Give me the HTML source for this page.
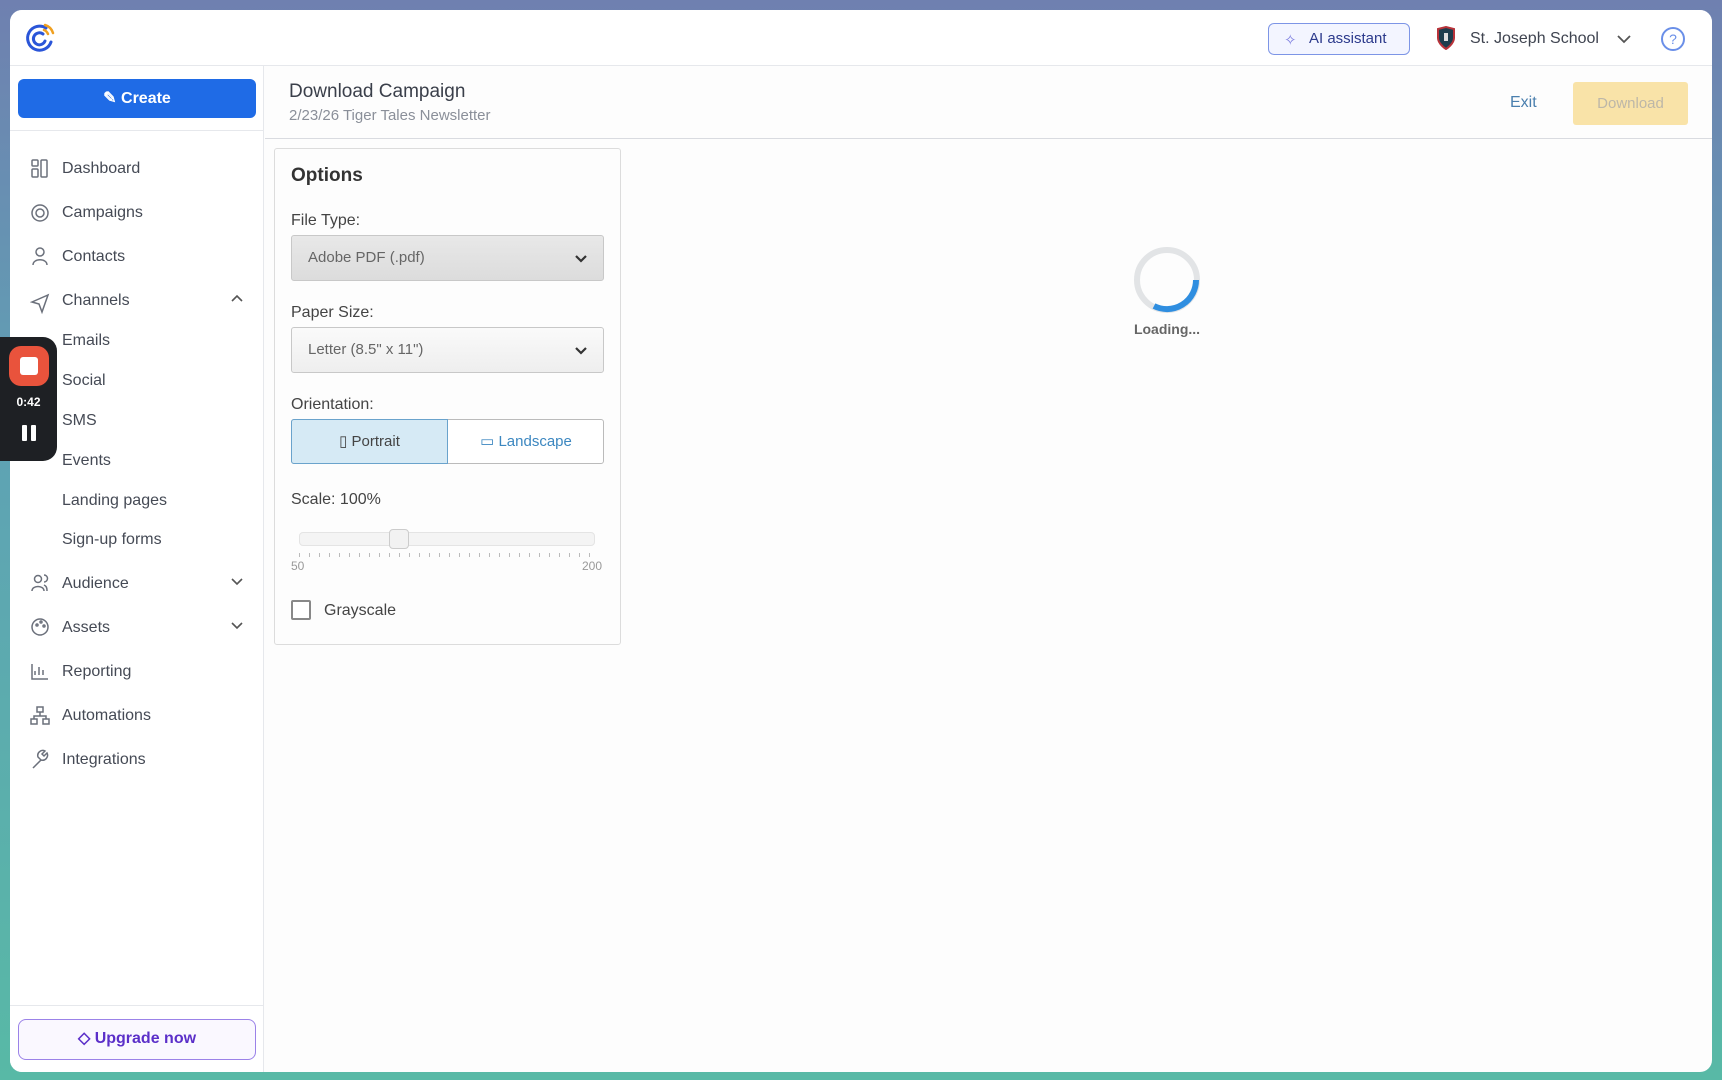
<!DOCTYPE html>
<html><head><meta charset="utf-8"><style>
*{box-sizing:border-box;margin:0;padding:0}
body{width:1722px;height:1080px;overflow:hidden;font-family:"Liberation Sans",sans-serif;background:linear-gradient(180deg,#6f80b0 0%,#5fa2b4 40%,#58b9a6 100%);position:relative}
.win{position:absolute;left:10px;top:10px;width:1702px;height:1062px;background:#fdfdfd;border-radius:12px;overflow:hidden}
.abs{position:absolute}
.top{left:0;top:0;width:1702px;height:56px;border-bottom:1px solid #e6e8ec;background:#fff}
.side{left:0;top:56px;width:254px;height:1006px;border-right:1px solid #e6e8ec;background:#fff}
.nav{position:absolute;left:52px;font-size:16px;color:#454a55}
.main-h{left:255px;top:56px;width:1447px;height:73px;border-bottom:1px solid #d9dbe0;background:#fdfdfd}
.lbl{position:absolute;font-size:16px;color:#444}
</style></head><body>
<div class="win">
 <div class="abs top">
  <svg class="abs" style="left:14px;top:12px" width="32" height="32" viewBox="0 0 32 32"><path d="M22 6A12 12 0 1 0 27 20" fill="none" stroke="#2a55d8" stroke-width="3" stroke-linecap="round"/><path d="M19 12A6 6 0 1 0 21 19" fill="none" stroke="#2a55d8" stroke-width="3" stroke-linecap="round"/><path d="M21 3A12 12 0 0 1 29 11" fill="none" stroke="#f0a020" stroke-width="2.5" stroke-linecap="round"/><path d="M20 8A7 7 0 0 1 24 12" fill="none" stroke="#f0a020" stroke-width="2.5" stroke-linecap="round"/></svg>
  <div class="abs" style="left:1258px;top:13px;width:142px;height:32px;border:1.5px solid #7d95e6;border-radius:6px;background:#f3f5ff;font-size:15px;color:#2c3a8c;line-height:29px;padding-left:40px">AI assistant</div>
  <div class="abs" style="left:1274px;top:21px;color:#7d7ee0;font-size:15px">✧</div>
  <svg class="abs" style="left:1426px;top:16px" width="20" height="24" viewBox="0 0 20 24"><path d="M2 3L10 1L18 3V12C18 18 10 23 10 23C10 23 2 18 2 12Z" fill="#1d3d4d" stroke="#b8333a" stroke-width="2"/><rect x="8" y="7" width="4" height="8" fill="#ddd"/></svg>
  <div class="abs" style="left:1460px;top:20px;font-size:16px;color:#3f4450">St. Joseph School</div>
  <svg class="abs" style="left:1606px;top:23px" width="16" height="12"><path d="M2 3L8 9L14 3" fill="none" stroke="#555" stroke-width="1.8"/></svg>
  <div class="abs" style="left:1651px;top:17px;width:24px;height:24px;border:2px solid #6a8fe8;border-radius:50%;color:#6a8fe8;font-size:14px;text-align:center;line-height:20px">?</div>
 </div>
 <div class="abs side">
  <div class="abs" style="left:8px;top:13px;width:238px;height:39px;background:#1f6be6;border-radius:6px;color:#fff;font-size:16px;font-weight:bold;text-align:center;line-height:39px">✎ Create</div>
  <div class="abs" style="left:0;top:64px;width:254px;border-top:1px solid #e6e8ec"></div>
  <div class="nav" style="top:94px">Dashboard</div>
  <div class="nav" style="top:138px">Campaigns</div>
  <div class="nav" style="top:182px">Contacts</div>
  <div class="nav" style="top:226px">Channels</div>
  <div class="nav" style="top:266px">Emails</div>
  <div class="nav" style="top:306px">Social</div>
  <div class="nav" style="top:346px">SMS</div>
  <div class="nav" style="top:386px">Events</div>
  <div class="nav" style="top:426px">Landing pages</div>
  <div class="nav" style="top:465px">Sign-up forms</div>
  <div class="nav" style="top:509px">Audience</div>
  <div class="nav" style="top:553px">Assets</div>
  <div class="nav" style="top:597px">Reporting</div>
  <div class="nav" style="top:641px">Automations</div>
  <div class="nav" style="top:685px">Integrations</div>
  <svg class="abs" style="left:20px;top:93px" width="20" height="640" viewBox="0 0 20 640" fill="none" stroke="#6b707b" stroke-width="1.5">
   <rect x="2" y="1" width="6" height="6" rx="1"/><rect x="2" y="10" width="6" height="8" rx="1"/><rect x="11" y="1" width="6" height="17" rx="1"/>
   <circle cx="10" cy="54" r="8"/><circle cx="10" cy="54" r="4"/>
   <circle cx="10" cy="93" r="4"/><path d="M3 106C3 99 17 99 17 106"/>
   <path d="M2 143L18 136L12 153L9 145Z"/>
   <circle cx="8" cy="420" r="3.5"/><path d="M2 432C2 426 14 426 14 432"/><path d="M14 416a3 3 0 0 1 0 7M17 432c0-4-1-5-3-6"/>
   <circle cx="10" cy="468" r="8"/><circle cx="7" cy="466" r="1"/><circle cx="11" cy="463" r="1"/><circle cx="14" cy="467" r="1"/>
   <path d="M2 505V520H18M5 516V512M9 516V508M13 516V511"/>
   <rect x="7" y="548" width="6" height="5"/><rect x="1" y="560" width="6" height="5"/><rect x="13" y="560" width="6" height="5"/><path d="M10 553V557H4V560M10 557H16V560"/>
   <path d="M3 609L11 601M11 601A5 5 0 0 0 17 594L14 597L12 595L15 592A5 5 0 0 0 8 598Z"/>
  </svg>
  <svg class="abs" style="left:220px;top:226px" width="14" height="340" fill="none" stroke="#555" stroke-width="1.6"><path d="M2 9L7 4L12 9"/><path d="M2 287L7 292L12 287"/><path d="M2 331L7 336L12 331"/></svg>
  <div class="abs" style="left:0;top:939px;width:254px;border-top:1px solid #e6e8ec"></div>
  <div class="abs" style="left:8px;top:953px;width:238px;height:41px;border:1.5px solid #9b82e8;border-radius:8px;background:#faf8ff;color:#5b2fc9;font-size:16px;font-weight:bold;text-align:center;line-height:38px">◇ Upgrade now</div>
 </div>
 <div class="abs main-h">
  <div class="abs" style="left:24px;top:15px;font-size:19px;color:#3a3f4a">Download Campaign</div>
  <div class="abs" style="left:24px;top:41px;font-size:15px;color:#8a8f99">2/23/26 Tiger Tales Newsletter</div>
  <div class="abs" style="left:1245px;top:28px;font-size:16px;color:#4a7fae">Exit</div>
  <div class="abs" style="left:1308px;top:16px;width:115px;height:43px;background:#f9e3a8;border-radius:3px;color:#bdb7a8;font-size:15px;text-align:center;line-height:43px">Download</div>
 </div>
 <div class="abs" style="left:264px;top:138px;width:347px;height:497px;border:1.5px solid #dcdcdc;border-radius:3px;background:#fdfdfd">
  <div class="abs" style="left:16px;top:16px;font-size:19px;font-weight:bold;color:#333">Options</div>
  <div class="lbl" style="left:16px;top:63px">File Type:</div>
  <div class="abs" style="left:16px;top:86px;width:313px;height:46px;border:1px solid #c8c8c8;border-radius:3px;background:linear-gradient(#e8e8e8,#dcdcdc);font-size:15px;color:#666;line-height:44px;padding-left:16px">Adobe PDF (.pdf)</div>
  <div class="lbl" style="left:16px;top:155px">Paper Size:</div>
  <div class="abs" style="left:16px;top:178px;width:313px;height:46px;border:1px solid #c8c8c8;border-radius:3px;background:linear-gradient(#fafafa,#eeeeee);font-size:15px;color:#666;line-height:44px;padding-left:16px">Letter (8.5" x 11")</div>
  <svg class="abs" style="left:299px;top:104px" width="14" height="110" fill="none" stroke="#333" stroke-width="2.2"><path d="M2 3L7 8L12 3"/><path d="M2 95L7 100L12 95"/></svg>
  <div class="lbl" style="left:16px;top:247px">Orientation:</div>
  <div class="abs" style="left:16px;top:270px;width:313px;height:45px;border:1px solid #bbb;border-radius:3px;background:#fff"></div>
  <div class="abs" style="left:16px;top:270px;width:157px;height:45px;border:1px solid #6aa3cc;border-radius:3px 0 0 3px;background:#d6eaf5;font-size:15px;color:#444;line-height:43px;text-align:center">▯ Portrait</div>
  <div class="abs" style="left:173px;top:270px;width:156px;height:45px;font-size:15px;color:#3c87c0;line-height:45px;text-align:center">▭ Landscape</div>
  <div class="lbl" style="left:16px;top:342px">Scale: 100%</div>
  <div class="abs" style="left:24px;top:383px;width:296px;height:14px;border:1px solid #e4e4e4;border-radius:4px;background:#f4f4f4"></div>
  <div class="abs" style="left:114px;top:380px;width:20px;height:20px;border:1px solid #ccc;border-radius:4px;background:#f2f2f2"></div>
  <div class="abs" style="left:24px;top:404px;width:296px;height:4px;background:repeating-linear-gradient(90deg,#bbb 0 1px,transparent 1px 10px)"></div>
  <div class="abs" style="left:16px;top:410px;font-size:12px;color:#999">50</div>
  <div class="abs" style="left:307px;top:410px;font-size:12px;color:#999">200</div>
  <div class="abs" style="left:16px;top:451px;width:20px;height:20px;border:2px solid #888;border-radius:2px;background:#fff"></div>
  <div class="lbl" style="left:49px;top:453px">Grayscale</div>
 </div>
 <svg class="abs" style="left:1123px;top:236px" width="68" height="68"><circle cx="34" cy="34" r="30" fill="none" stroke="#e2e4e6" stroke-width="6"/><path d="M63 34A29 29 0 0 1 21 60" fill="none" stroke="#2f8ee0" stroke-width="6"/></svg>
 <div class="abs" style="left:1120px;top:311px;width:74px;text-align:center;font-size:14px;font-weight:bold;color:#666">Loading...</div>
</div>
<div class="abs" style="left:0;top:337px;width:57px;height:124px;background:#1e2024;border-radius:0 14px 14px 0"></div>
<div class="abs" style="left:9px;top:346px;width:40px;height:40px;background:#e9533c;border-radius:12px"></div>
<div class="abs" style="left:20px;top:357px;width:18px;height:18px;background:#fff;border-radius:3px"></div>
<div class="abs" style="left:0;top:395px;width:57px;text-align:center;font-size:12px;font-weight:bold;color:#fff">0:42</div>
<div class="abs" style="left:22px;top:425px;width:5px;height:16px;background:#fff;border-radius:1px"></div>
<div class="abs" style="left:31px;top:425px;width:5px;height:16px;background:#fff;border-radius:1px"></div>
</body></html>
